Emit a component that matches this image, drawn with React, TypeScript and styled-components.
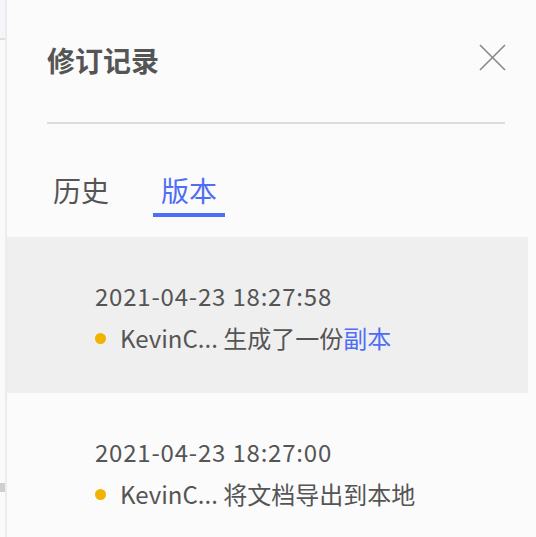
import React from "react";
import styled, { createGlobalStyle } from "styled-components";

const GlobalStyle = createGlobalStyle`
  html, body { margin: 0; padding: 0; background: #fbfbfb; }
  body { font-family: "Noto Sans CJK SC", "Noto Sans", sans-serif; }
  * { box-sizing: border-box; }
`;

const Page = styled.div`
  display: flex;
  width: 536px;
  height: 537px;
  overflow: hidden;
  background: #fbfbfb;
`;

const Strip = styled.div`
  width: 5px;
  display: flex;
  flex-direction: column;
  background: #fafafa;
`;

const StripPart = styled.div<{ $h: number; $bg: string }>`
  height: ${(p) => p.$h}px;
  flex-shrink: 0;
  background: ${(p) => p.$bg};
`;

const Edge = styled.div`
  width: 2px;
  background: #ececec;
`;

const Panel = styled.div`
  flex: 1;
  display: flex;
  flex-direction: column;
  background: #fbfbfb;
  color: #555;
  & > * { flex-shrink: 0; }
`;

const Header = styled.div`
  display: flex;
  align-items: center;
  justify-content: space-between;
  height: 40px;
  margin-top: 40px;
  padding: 0 31px 0 40px;
`;

const Title = styled.h1`
  margin: 0;
  font-size: 28px;
  font-weight: 700;
  line-height: 40px;
  color: #555;
`;

const Close = styled.button`
  width: 28px;
  height: 28px;
  padding: 0;
  margin: 0 -1px 6px 0;
  border: none;
  background: none;
  display: flex;
  align-items: center;
  justify-content: center;
  cursor: pointer;
`;

const Divider = styled.div`
  height: 2px;
  margin: 42px 31px 0 40px;
  background: #dcdcdc;
`;

const Tabs = styled.div`
  display: flex;
  gap: 36px;
  margin: 48px 0 0 38px;
`;

const Tab = styled.div<{ $active?: boolean }>`
  padding: 0 8px 5px;
  font-size: 28px;
  line-height: 36px;
  color: ${(p) => (p.$active ? "#4f6ef5" : "#555")};
  border-bottom: 4px solid ${(p) => (p.$active ? "#4f6ef5" : "transparent")};
`;

const List = styled.div`
  margin: 20px 8px 0 0;
  display: flex;
  flex-direction: column;
  & > * { flex-shrink: 0; }
`;

const Item = styled.div<{ $selected?: boolean }>`
  height: 156px;
  padding: 44px 0 0 88px;
  background: ${(p) => (p.$selected ? "#efefef" : "transparent")};
`;

const DateLine = styled.div`
  font-size: 24px;
  letter-spacing: 0.8px;
  line-height: 30px;
  color: #555;
`;

const Action = styled.div`
  display: flex;
  align-items: center;
  margin-top: 12px;
  font-size: 24px;
  line-height: 30px;
  color: #555;
  white-space: nowrap;
`;

const Dot = styled.span`
  width: 11px;
  height: 11px;
  border-radius: 50%;
  background: #f0b400;
  margin-right: 14px;
  flex-shrink: 0;
`;

const Link = styled.span`
  color: #4f6ef5;
`;

export default function App() {
  return (
    <>
      <GlobalStyle />
      <Page>
        <Strip>
          <StripPart $h={38} $bg="#f4f6f9" />
          <StripPart $h={2} $bg="#dedede" />
          <StripPart $h={443} $bg="#fafafa" />
          <StripPart $h={9} $bg="#cfcfcf" />
        </Strip>
        <Edge />
        <Panel>
          <Header>
            <Title>修订记录</Title>
            <Close aria-label="close">
              <svg width="27" height="27" viewBox="0 0 27 27">
                <path d="M1 1L26 26M26 1L1 26" stroke="#888" strokeWidth="1.6" fill="none" />
              </svg>
            </Close>
          </Header>
          <Divider />
          <Tabs>
            <Tab>历史</Tab>
            <Tab $active>版本</Tab>
          </Tabs>
          <List>
            <Item $selected>
              <DateLine>2021-04-23 18:27:58</DateLine>
              <Action>
                <Dot />
                KevinC... 生成了一份<Link>副本</Link>
              </Action>
            </Item>
            <Item>
              <DateLine>2021-04-23 18:27:00</DateLine>
              <Action>
                <Dot />
                KevinC... 将文档导出到本地
              </Action>
            </Item>
          </List>
        </Panel>
      </Page>
    </>
  );
}
